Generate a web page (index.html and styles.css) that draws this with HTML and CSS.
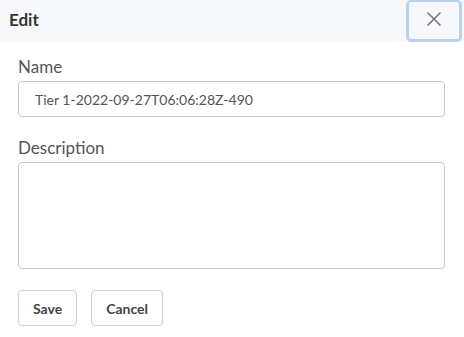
FILE: index.html
```html
<!DOCTYPE html>
<html lang="en">
<head>
    <meta charset="UTF-8">
    <meta name="viewport" content="width=device-width, initial-scale=1.0">
    <title>Edit</title>
    <link rel="stylesheet" href="styles.css">
</head>
<body>
    <div class="dialog">
        <header class="dialog-header">
            <h1>Edit</h1>
            <button class="close-button" aria-label="Close">
                <svg width="16" height="16" viewBox="0 0 16 16">
                    <path d="M1.5 1.5 L14.5 14.5 M14.5 1.5 L1.5 14.5" stroke="#7a7a7a" stroke-width="1.6" fill="none"/>
                </svg>
            </button>
        </header>
        <div class="dialog-body">
            <label class="field-label" for="name">Name</label>
            <input type="text" id="name" class="text-input" value="Tier 1-2022-09-27T06:06:28Z-490">

            <label class="field-label desc-label" for="description">Description</label>
            <textarea id="description" class="text-area"></textarea>

            <div class="actions">
                <button class="btn">Save</button>
                <button class="btn">Cancel</button>
            </div>
        </div>
    </div>
</body>
</html>
```

FILE: styles.css
```css
body {
    font-family: 'Lato', 'Open Sans', sans-serif;
    margin: 0;
    padding: 0;
    background-color: #fff;
    color: #444;
}
.dialog {
    width: 464px;
}
.dialog-header {
    display: flex;
    justify-content: space-between;
    align-items: stretch;
    height: 42px;
    background-color: #f7f8fc;
}
.dialog-header h1 {
    margin: 0;
    padding-left: 9px;
    font-size: 17px;
    font-weight: bold;
    color: #333;
    line-height: 40px;
}
.close-button {
    width: 56px;
    margin-right: 2px;
    background-color: #f7f8fc;
    border: 3px solid #b9d2f0;
    border-top-width: 2px;
    border-radius: 5px;
    display: flex;
    justify-content: center;
    align-items: center;
    padding: 0 0 3px;
    cursor: pointer;
}
.dialog-body {
    display: flex;
    flex-direction: column;
    padding: 14px 19px 0 18px;
}
.field-label {
    font-size: 17px;
    color: #555;
    line-height: 22px;
    margin-bottom: 3px;
}
.desc-label {
    margin-top: 20px;
}
.text-input {
    box-sizing: border-box;
    height: 36px;
    padding-left: 16px;
    padding-right: 12px;
    border: 1px solid #c8c8c8;
    border-radius: 4px;
    font-family: inherit;
    font-size: 14px;
    color: #555;
}
.text-area {
    box-sizing: border-box;
    height: 107px;
    border: 1px solid #c8c8c8;
    border-radius: 4px;
    resize: none;
}
.actions {
    display: flex;
    gap: 14px;
    margin-top: 21px;
}
.btn {
    height: 36px;
    padding: 0 14px;
    background-color: #fff;
    border: 1px solid #cfcfcf;
    border-radius: 4px;
    font-family: inherit;
    font-size: 14px;
    font-weight: bold;
    color: #444;
    cursor: pointer;
}
```
